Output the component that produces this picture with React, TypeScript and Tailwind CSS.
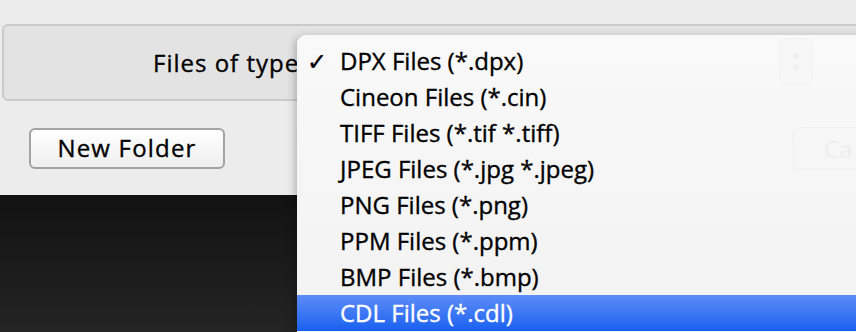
const items = [
  'DPX Files (*.dpx)',
  'Cineon Files (*.cin)',
  'TIFF Files (*.tif *.tiff)',
  'JPEG Files (*.jpg *.jpeg)',
  'PNG Files (*.png)',
  'PPM Files (*.ppm)',
  'BMP Files (*.bmp)',
  'CDL Files (*.cdl)',
]

const selected = 0
const highlighted = 7

export default function App() {
  return (
    <div className="relative w-[856px] h-[332px] overflow-hidden bg-[#ececec] font-['Open_Sans',sans-serif] text-black [-webkit-text-stroke:0.35px]">
      {/* dialog chrome */}
      <div className="h-[24px]" />
      <div className="ml-[2px] mr-[-20px] h-[77px] rounded-[6px] border-2 border-[#cacaca] bg-[#e3e3e3] flex items-center pl-[149px]">
        <span className="text-[24px] leading-none tracking-[1px]">Files of type:</span>
      </div>
      <div className="h-[94px] pt-[27px] pl-[29px]">
        <button className="w-[196px] h-[41px] rounded-[6px] border-2 border-[#a3a3a3] bg-gradient-to-b from-white to-[#eeeeee] text-[24px] leading-none tracking-[1.2px] flex items-center justify-center pb-[2px]">
          New Folder
        </button>
      </div>
      <div className="h-[137px] bg-gradient-to-b from-[#121212] to-[#242424]" />

      {/* popup menu */}
      <div className="absolute left-[297px] top-[35px] right-[-12px] bottom-0 rounded-tl-[9px] bg-gradient-to-b from-[#f9f9f9] to-[#f2f2f2] shadow-[-2px_2px_8px_rgba(0,0,0,0.25)] pt-[8px]">
        {/* faint controls showing through the menu */}
        <div className="absolute left-[482px] top-[3px] w-[34px] h-[47px] rounded-[9px] border border-[#f2f2f2] bg-[#f7f7f7] flex flex-col items-center justify-center gap-[5px]">
          <span className="w-[6px] h-[6px] rounded-full bg-[#f0f0f0]" />
          <span className="w-[6px] h-[6px] rounded-full bg-[#f0f0f0]" />
        </div>
        <div className="absolute left-[496px] top-[92px] w-[80px] h-[43px] rounded-[9px] border border-[#f0f0f0] flex items-center pl-[30px] text-[24px] text-[#eeeeee] [-webkit-text-stroke:0px]">
          Ca
        </div>

        {items.map((label, i) => (
          <div
            key={label}
            className={
              i === highlighted
                ? 'relative h-[36px] flex items-center bg-gradient-to-b from-[#5c8cf7] to-[#1660ef] text-white'
                : 'relative h-[36px] flex items-center'
            }
          >
            <span className="w-[43px] pl-[10px] pt-[2px] text-[24px] leading-none font-bold font-['DejaVu_Sans',sans-serif]">
              {i === selected ? '✓' : ''}
            </span>
            <span className="text-[24px] leading-[36px] whitespace-nowrap">{label}</span>
          </div>
        ))}
      </div>
    </div>
  )
}
